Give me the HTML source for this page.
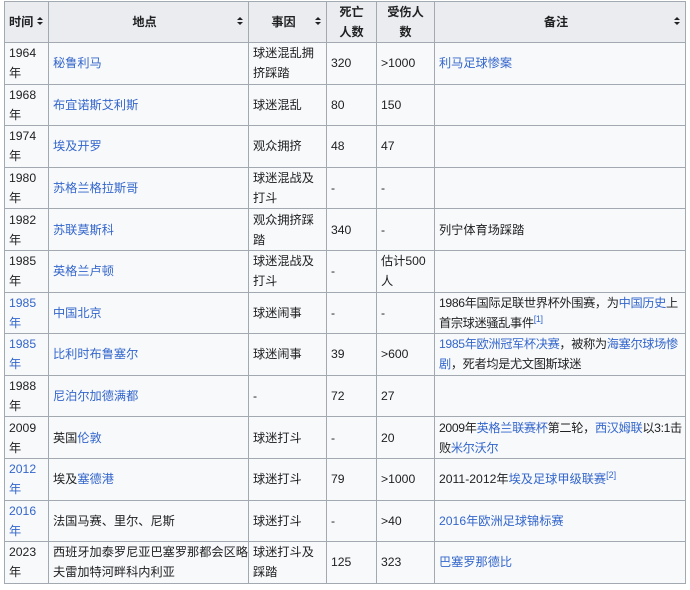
<!DOCTYPE html>
<html><head><meta charset="utf-8"><style>
body{margin:0;background:#fff;font-family:"Liberation Sans","Noto Sans CJK SC",sans-serif;font-size:12.2px;color:#202122}
table{position:absolute;left:4px;top:1px;border-collapse:collapse;table-layout:fixed;width:682px;background:#f8f9fa}
td,th{border:1px solid #a2a9b1;padding:0 4px;line-height:20px;vertical-align:middle;text-align:left;overflow:hidden}
th{background:#eaecf0;font-weight:bold;text-align:center;position:relative}
th.s{padding-right:12px;white-space:nowrap}
th.s:after{content:"";position:absolute;right:5px;top:15px;width:0;height:0;border:3px solid transparent;border-bottom:3px solid #202122;border-top:none}
th.s:before{content:"";position:absolute;right:5px;top:20px;width:0;height:0;border:3px solid transparent;border-top:3px solid #202122;border-bottom:none}
a{color:#3366cc;text-decoration:none}
tr{height:41.6px}
tr.h{height:40px}
sup{font-size:9px;line-height:0}
td.n{white-space:nowrap;letter-spacing:-0.35px}
</style></head><body>
<table>
<colgroup><col style="width:44px"><col style="width:200px"><col style="width:78px"><col style="width:50px"><col style="width:58px"><col></colgroup>
<tr class="h"><th class="s" style="text-align:left">时间</th><th class="s">地点</th><th class="s">事因</th><th>死亡<br>人数</th><th>受伤人<br>数</th><th class="s">备注</th></tr>
<tr><td>1964<br>年</td><td><a>秘鲁利马</a></td><td>球迷混乱拥<br>挤踩踏</td><td>320</td><td>&gt;1000</td><td><a>利马足球惨案</a></td></tr>
<tr><td>1968<br>年</td><td><a>布宜诺斯艾利斯</a></td><td>球迷混乱</td><td>80</td><td>150</td><td></td></tr>
<tr><td>1974<br>年</td><td><a>埃及开罗</a></td><td>观众拥挤</td><td>48</td><td>47</td><td></td></tr>
<tr><td>1980<br>年</td><td><a>苏格兰格拉斯哥</a></td><td>球迷混战及<br>打斗</td><td>-</td><td>-</td><td></td></tr>
<tr><td>1982<br>年</td><td><a>苏联莫斯科</a></td><td>观众拥挤踩<br>踏</td><td>340</td><td>-</td><td>列宁体育场踩踏</td></tr>
<tr><td>1985<br>年</td><td><a>英格兰卢顿</a></td><td>球迷混战及<br>打斗</td><td>-</td><td>估计500<br>人</td><td></td></tr>
<tr><td><a>1985<br>年</a></td><td><a>中国北京</a></td><td>球迷闹事</td><td>-</td><td>-</td><td class="n">1986年国际足联世界杯外围赛，为<a>中国历史</a>上<br>首宗球迷骚乱事件<sup><a>[1]</a></sup></td></tr>
<tr><td><a>1985<br>年</a></td><td><a>比利时布鲁塞尔</a></td><td>球迷闹事</td><td>39</td><td>&gt;600</td><td class="n"><a>1985年欧洲冠军杯决赛</a>，被称为<a>海塞尔球场惨</a><br><a>剧</a>，死者均是尤文图斯球迷</td></tr>
<tr><td>1988<br>年</td><td><a>尼泊尔加德满都</a></td><td>-</td><td>72</td><td>27</td><td></td></tr>
<tr><td>2009<br>年</td><td>英国<a>伦敦</a></td><td>球迷打斗</td><td>-</td><td>20</td><td class="n">2009年<a>英格兰联赛杯</a>第二轮，<a>西汉姆联</a>以3:1击<br>败<a>米尔沃尔</a></td></tr>
<tr><td><a>2012<br>年</a></td><td>埃及<a>塞德港</a></td><td>球迷打斗</td><td>79</td><td>&gt;1000</td><td>2011-2012年<a>埃及足球甲级联赛</a><sup><a>[2]</a></sup></td></tr>
<tr><td><a>2016<br>年</a></td><td>法国马赛、里尔、尼斯</td><td>球迷打斗</td><td>-</td><td>&gt;40</td><td><a>2016年欧洲足球锦标赛</a></td></tr>
<tr><td>2023<br>年</td><td style="white-space:nowrap">西班牙加泰罗尼亚巴塞罗那都会区略<br>夫雷加特河畔科内利亚</td><td>球迷打斗及<br>踩踏</td><td>125</td><td>323</td><td><a>巴塞罗那德比</a></td></tr>
</table>
</body></html>
